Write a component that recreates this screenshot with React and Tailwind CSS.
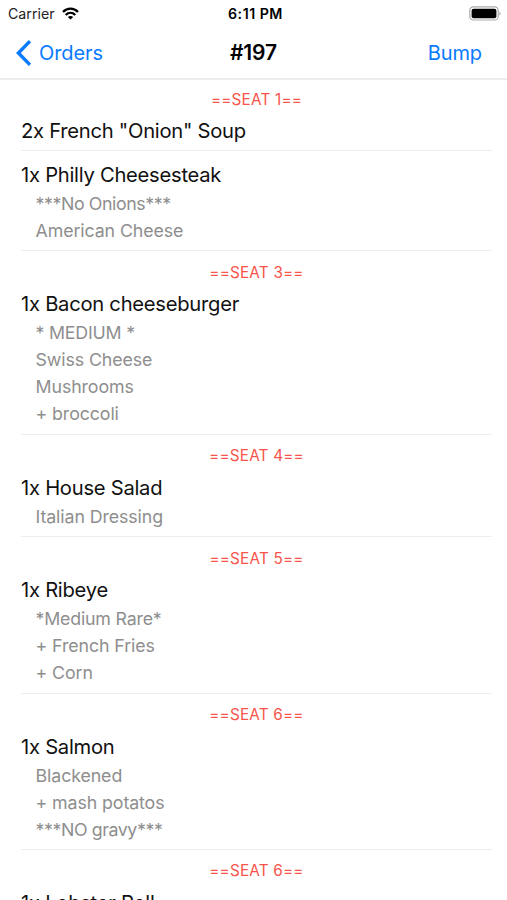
import clsx from 'clsx'

const orders = [
  { seat: '==SEAT 1==', name: '2x French "Onion" Soup', mods: [] },
  { name: '1x Philly Cheesesteak', mods: ['***No Onions***', 'American Cheese'] },
  { seat: '==SEAT 3==', name: '1x Bacon cheeseburger', mods: ['* MEDIUM *', 'Swiss Cheese', 'Mushrooms', '+ broccoli'] },
  { seat: '==SEAT 4==', name: '1x House Salad', mods: ['Italian Dressing'] },
  { seat: '==SEAT 5==', name: '1x Ribeye', mods: ['*Medium Rare*', '+ French Fries', '+ Corn'] },
  { seat: '==SEAT 6==', name: '1x Salmon', mods: ['Blackened', '+ mash potatos', '***NO gravy***'] },
  { seat: '==SEAT 6==', name: '1x Lobster Roll', mods: [] },
]

function WifiIcon() {
  return (
    <svg className="ml-[7px] h-[13px] w-[17px]" viewBox="0 0 17 13" fill="none" stroke="#000" strokeWidth="2.3">
      <path d="M1 5C5.2 .6 11.8 .6 16 5" />
      <path d="M3.7 8C6.5 5.2 10.5 5.2 13.3 8" />
      <path d="M8.5 12.6 5.8 10Q8.5 7.8 11.2 10Z" fill="#000" stroke="none" />
    </svg>
  )
}

function BatteryIcon() {
  return (
    <svg className="h-[15px] w-8" viewBox="0 0 32 15">
      <rect x=".8" y=".8" width="28.4" height="13.2" rx="3.6" fill="#fff" stroke="#a9a9a9" strokeWidth="1.2" />
      <rect x="2.6" y="2.8" width="24.8" height="9.4" rx="2" fill="#000" />
      <path d="M30.4 5.4Q31.6 6 31.6 7.4T30.4 9.4Z" fill="#a9a9a9" />
    </svg>
  )
}

function Order({ seat, name, mods }) {
  return (
    <li className="border-b border-[#eeeeee]">
      {seat ? (
        <p className="mb-[7.5px] pt-[11.5px] text-center text-[15.3px] leading-5 tracking-[0.2px] text-[#f8544b]">
          {seat}
        </p>
      ) : (
        <div className="h-[10px]" />
      )}
      <h2 className="text-[20.2px] leading-[27px] tracking-[-0.26px] text-[#111]">{name}</h2>
      <div className={mods.length ? 'pt-[2px] pb-[6.4px] pl-[14.5px]' : 'pb-[6px]'}>
        {mods.map((mod) => (
          <p
            key={mod}
            className={clsx(
              'text-[17.8px] leading-[27px] text-[#8e8e8e]',
              mod.startsWith('***') ? 'tracking-[-0.42px]' : mod.startsWith('*') ? 'tracking-[-0.2px]' : 'tracking-[-0.1px]',
            )}
          >
            {mod}
          </p>
        ))}
      </div>
    </li>
  )
}

export default function App() {
  return (
    <div className="h-[900px] w-[507px] overflow-hidden bg-white font-['Inter',sans-serif] whitespace-nowrap">
      <header className="flex h-[80px] flex-col border-b-2 border-[#ededed]">
        <div className="grid h-[27px] grid-cols-3 items-center pr-[6px] pl-2 text-[14.2px] text-[#222]">
          <div className="flex items-center">
            Carrier
            <WifiIcon />
          </div>
          <span className="pl-[2px] text-center text-[14.2px] font-semibold tracking-[0.5px] text-black">6:11 PM</span>
          <div className="flex justify-end">
            <BatteryIcon />
          </div>
        </div>
        <nav className="grid h-[51px] grid-cols-3 items-center pr-[25px] pl-4 text-[20px] tracking-[-0.1px] text-[#0a7aff]">
          <button className="flex items-center gap-2 text-left">
            <svg className="h-[26px] w-[15px]" viewBox="0 0 15 26" fill="none" stroke="#0a7aff" strokeWidth="3.4">
              <path d="M14 1.2 2.4 13 14 24.8" />
            </svg>
            Orders
          </button>
          <h1 className="pl-[9px] text-center text-[21px] font-semibold text-black">#197</h1>
          <button className="text-right">Bump</button>
        </nav>
      </header>
      <ul className="-mt-[2px] pr-[15px] pl-[21px]">
        {orders.map((order) => (
          <Order key={order.name} {...order} />
        ))}
      </ul>
    </div>
  )
}
